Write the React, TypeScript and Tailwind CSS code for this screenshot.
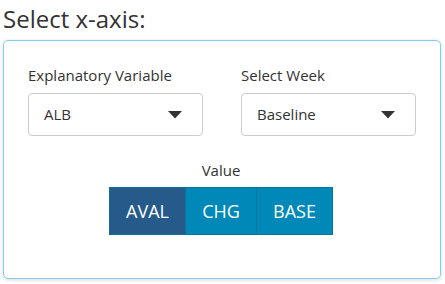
import React from "react";

function Caret() {
  return (
    <svg width="14" height="8" viewBox="0 0 14 8" className="shrink-0">
      <path d="M0 0 L14 0 L7 7.5 Z" fill="#333" />
    </svg>
  );
}

function Select({ label, value }: { label: string; value: string }) {
  return (
    <div className="flex flex-col w-[175px]">
      <div className="text-[15px] leading-[20px] text-[#333] h-[20px]">{label}</div>
      <div className="mt-[8px] h-[43px] border border-[#ccc] rounded-[4px] flex items-center justify-between pl-[15px] pr-[20px] bg-white">
        <span className="text-[15px] text-[#333]">{value}</span>
        <Caret />
      </div>
    </div>
  );
}

export default function App() {
  return (
    <div
      className="w-[445px] h-[284px] bg-white text-[#333] overflow-hidden"
      style={{ fontFamily: '"Open Sans", sans-serif' }}
    >
      <div className="pl-[3px] pt-[3px] text-[24px] leading-[31px] text-[#333]">Select x-axis:</div>
      <div className="ml-[3px] mt-[6px] w-[438px] h-[239px] border border-[#7fd0ee] rounded-[5px] shadow-[0_1px_4px_rgba(0,0,0,0.15)] bg-white pl-[24px] pr-[24px] pt-[24px]">
        <div className="flex gap-[38px]">
          <Select label="Explanatory Variable" value="ALB" />
          <Select label="Select Week" value="Baseline" />
        </div>
        <div className="flex flex-col items-center mt-[24px] -ml-[2px]">
          <div className="text-[15px] leading-[20px] text-[#333]">Value</div>
          <div className="mt-[7px] flex h-[48px]">
            <div className="w-[77px] flex items-center justify-center bg-[#255a8b] border border-[#0f6f94] text-white text-[18px]">AVAL</div>
            <div className="w-[71px] flex items-center justify-center bg-[#0089b8] border-y border-r border-[#0a76a0] text-white text-[18px]">CHG</div>
            <div className="w-[76px] flex items-center justify-center bg-[#0089b8] border-y border-r border-[#0a76a0] text-white text-[18px]">BASE</div>
          </div>
        </div>
      </div>
    </div>
  );
}
